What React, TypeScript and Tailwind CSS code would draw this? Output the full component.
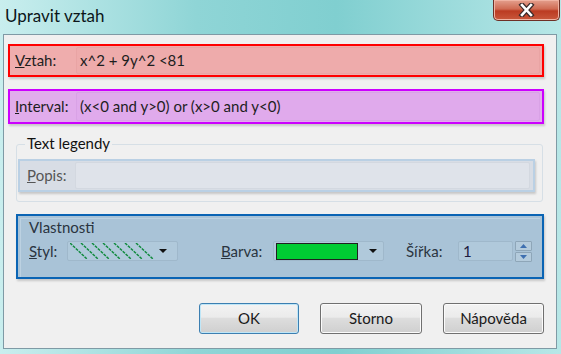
const font = { fontFamily: 'Lato, "Open Sans", sans-serif' };

const DropArrow = () => (
  <svg width="10" height="6" viewBox="0 0 10 6">
    <path d="M1 1h8L5 5z" fill="#111" />
  </svg>
);

const Hatch = () => (
  <svg width="84" height="16" viewBox="0 0 84 16">
    {[0, 11, 22, 33, 44, 55, 66].map((x) => (
      <line
        key={x}
        x1={x}
        y1={0}
        x2={x + 17}
        y2={16}
        stroke="#0f8a3c"
        strokeWidth="1.5"
        strokeDasharray="3 1"
      />
    ))}
  </svg>
);

const Button = ({ label, focused }: { label: string; focused?: boolean }) => (
  <div
    className={
      "flex h-[31px] items-center justify-center rounded-[3px] border bg-[linear-gradient(#f3f3f3,#ebebeb_45%,#dddddd_50%,#cfcfcf)] text-[15px] text-[#1a1a1a] " +
      (focused
        ? "border-[#3c7fb1] shadow-[inset_0_0_0_1px_#bfe6f7]"
        : "border-[#707070] shadow-[inset_0_0_0_1px_#fbfbfb]")
    }
  >
    {label}
  </div>
);

export default function App() {
  return (
    <div
      className="relative h-[354px] w-[561px] overflow-hidden bg-[linear-gradient(90deg,#c9eeee,#8fd5d6_35%,#80cfd0_60%,#b7e7e7)]"
      style={font}
    >
      {/* title bar */}
      <div className="flex h-[34px] items-start justify-between">
        <div className="pl-[5px] pt-[3px] text-[17px] text-[#0b1519]">Upravit vztah</div>
        <div className="mr-[1px] flex h-[21px] w-[67px] items-center justify-center rounded-b-[5px] border border-t-0 border-[#6e3026] bg-[linear-gradient(#e4a08e,#cf6a52_45%,#bb3b22_55%,#c9583c)] shadow-[inset_0_0_0_1px_#f0b3a3]">
          <svg width="17" height="14" viewBox="0 0 17 14">
            <path d="M4 2l9 10M13 2L4 12" stroke="#3b2a2a" strokeWidth="5" strokeLinecap="square" />
            <path d="M4 2l9 10M13 2L4 12" stroke="#ffffff" strokeWidth="2.6" strokeLinecap="square" />
          </svg>
        </div>
      </div>

      {/* client area */}
      <div className="ml-[3px] flex h-[315px] w-[554px] flex-col border border-[#7f9aa5] bg-[#f0f0f0] text-[15px] text-[#1e1e1e]">
        {/* Vztah */}
        <div className="ml-[4px] mt-[9px] flex h-[33px] w-[536px] border-2 border-[#ff0000] bg-[#efadad] py-[1px] shadow-[1px_2px_2px_#c8c8c8]">
          <div className="flex w-[66px] items-center pl-[5px]">
            <span><span className="underline">V</span>ztah:</span>
          </div>
          <div className="mr-[2px] flex flex-1 items-center rounded-[2px] border border-[#e9a4a4] bg-[#eeabab] pl-[3px]">
            x^2 + 9y^2 &lt;81
          </div>
        </div>

        {/* Interval */}
        <div className="ml-[4px] mt-[12px] flex h-[35px] w-[536px] border-2 border-[#cc00ff] bg-[#e1acec] py-[1px] shadow-[1px_2px_2px_#c8c8c8]">
          <div className="flex w-[66px] items-center pl-[5px]">
            <span><span className="underline">I</span>nterval:</span>
          </div>
          <div className="mr-[2px] flex flex-1 items-center rounded-[2px] border border-[#d9a2e6] bg-[#e0aaec] pl-[3px]">
            (x&lt;0 and y&gt;0) or (x&gt;0 and y&lt;0)
          </div>
        </div>

        {/* Text legendy */}
        <div className="ml-[12px] mt-[20px] h-[58px] w-[527px] rounded-[3px] border border-[#d6dfe6]">
          <div className="-mt-[10px] ml-[8px] h-[17px] w-fit bg-[#f0f0f0] px-[2px] leading-[17px] text-[#111]">
            Text legendy
          </div>
          <div className="ml-[1px] mt-[7px] flex h-[33px] w-[517px] border-2 border-[#bad0e4] bg-[#d8dde5] py-[1px] shadow-[1px_2px_2px_#c8c8c8]">
            <div className="flex w-[55px] items-center pl-[7px] text-[#555]">
              <span><span className="underline">P</span>opis:</span>
            </div>
            <div className="mr-[3px] flex-1 rounded-[2px] border border-[#d3d8e0] bg-[#dfe3ea]" />
          </div>
        </div>

        {/* Vlastnosti */}
        <div className="ml-[12px] mt-[12px] flex h-[65px] w-[528px] flex-col border-2 border-[#0a64b4] bg-[#a9c3d7] shadow-[1px_2px_2px_#c8c8c8]">
          <div className="ml-[2px] mr-[2px] mt-[2px] flex-1 border-l border-t border-[#bcd1e1] pl-[8px]">
            <div className="h-[16px] leading-[16px] text-[#2a3440]">Vlastnosti</div>
            <div className="mt-[6px] flex h-[20px] items-center">
              <div className="w-[38px] text-[#2a3440]">
                <span className="underline">S</span>tyl:
              </div>
              <div className="flex h-[20px] w-[111px] items-center justify-between rounded-[2px] border border-[#9fb8cb] bg-[#b0c9db] pl-[2px] pr-[9px]">
                <Hatch />
                <DropArrow />
              </div>
              <div className="ml-[43px] w-[52px] text-[#2a3440]">
                <span className="underline">B</span>arva:
              </div>
              <div className="flex h-[20px] w-[111px] items-center justify-between rounded-[2px] border border-[#9fb8cb] bg-[#b0c9db] pl-[2px] pr-[5px]">
                <div className="h-[17px] w-[82px] border border-[#202020] bg-[#00cc33]" />
                <DropArrow />
              </div>
              <div className="ml-[22px] w-[52px] text-[#2a3440]">Šířka:</div>
              <div className="flex h-[20px] w-[55px] items-center rounded-[2px] border border-[#9fb8cb] bg-[#b0c9db] pl-[4px] text-[#1c1c40]">
                1
              </div>
              <div className="ml-[2px] flex h-[21px] w-[17px] flex-col gap-[1px]">
                <div className="flex flex-1 items-center justify-center rounded-[1px] border border-[#8ea6b8] bg-[#b4cbdc]">
                  <svg width="7" height="4" viewBox="0 0 7 4"><path d="M0 4L3.5 0 7 4z" fill="#3e6fb0" /></svg>
                </div>
                <div className="flex flex-1 items-center justify-center rounded-[1px] border border-[#8ea6b8] bg-[#b4cbdc]">
                  <svg width="7" height="4" viewBox="0 0 7 4"><path d="M0 0h7L3.5 4z" fill="#3e6fb0" /></svg>
                </div>
              </div>
            </div>
          </div>
        </div>

        {/* buttons */}
        <div className="mt-[24px] grid w-[540px] grid-cols-[100px_102px_101px] justify-end gap-x-[21px]">
          <Button label="OK" focused />
          <Button label="Storno" />
          <Button label="Nápověda" />
        </div>
      </div>
    </div>
  );
}
